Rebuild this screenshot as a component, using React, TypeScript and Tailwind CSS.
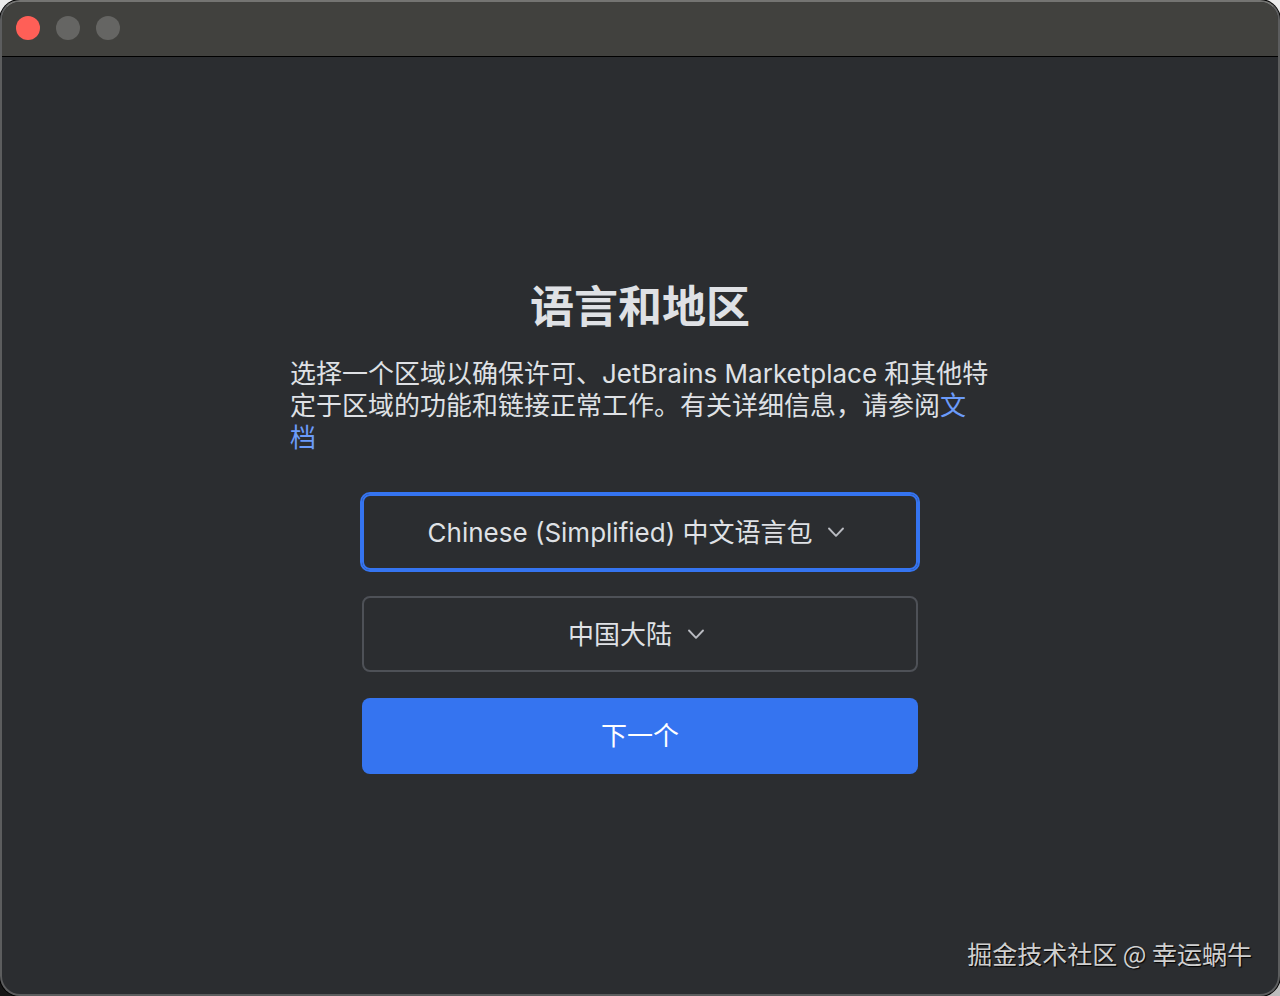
import { useState } from "react";

type PickerProps = {
  label: string;
  options: string[];
};

function Chevron() {
  return (
    <svg
      className="pointer-events-none h-8 w-8 shrink-0"
      viewBox="0 0 32 32"
      fill="none"
      stroke="#b9bbc1"
      strokeWidth="1.9"
      strokeLinecap="round"
      strokeLinejoin="round"
      aria-hidden="true"
    >
      <path d="M9 12.5 16 19.8l7-7.3" />
    </svg>
  );
}

function Picker({ label, options }: PickerProps) {
  const [value, setValue] = useState(options[0]);
  return (
    <div className="flex h-[76px] items-center justify-center rounded-lg border-2 border-[#4e5157] first:border-[#3574f0] first:outline-2 first:outline-[#3574f0]">
      <select
        aria-label={label}
        value={value}
        onChange={(e) => setValue(e.target.value)}
        className="h-12 cursor-pointer appearance-none bg-transparent pt-0.5 pr-2 leading-10 outline-none [field-sizing:content]"
      >
        {options.map((option) => (
          <option key={option} className="bg-[#2b2d30]">
            {option}
          </option>
        ))}
      </select>
      <Chevron />
    </div>
  );
}

function TitleBar() {
  return (
    <header className="flex h-[55px] items-center gap-4 border-b border-black bg-[#41413e] px-3.5 pb-0.5">
      <button type="button" aria-label="关闭" className="size-6 rounded-full bg-[#ff5f57]" />
      <button type="button" aria-label="最小化" className="size-6 rounded-full bg-[#656563]" />
      <button type="button" aria-label="缩放" className="size-6 rounded-full bg-[#656563]" />
    </header>
  );
}

export default function App() {
  return (
    <div className="flex min-h-screen bg-[linear-gradient(#ececec_50%,transparent_50%),linear-gradient(to_right,#151515,#bdbdbd)] font-[Inter,'Noto_Sans_CJK_SC',sans-serif] text-[26px] leading-8 text-[#dfe1e5]">
      <div className="relative flex grow flex-col overflow-hidden rounded-[20px] border-2 border-[#5c5d5e] border-t-[#747472] bg-[#2b2d30] shadow-[0_0_0_1px_#000]">
        <TitleBar />
        <main className="flex grow flex-col items-center justify-center px-6 pt-1">
          <h1 className="text-[44px] leading-[52px] font-bold">语言和地区</h1>
          <p className="mt-[25px] w-full max-w-[700px]">
            选择一个区域以确保许可、JetBrains Marketplace 和其他特定于区域的功能和链接正常工作。有关详细信息，请参阅
            <a href="#docs" className="text-[#6b9bfa]">
              文档
            </a>
          </p>
          <form
            className="mt-10 flex w-full max-w-[556px] flex-col gap-[26px]"
            onSubmit={(e) => e.preventDefault()}
          >
            <Picker label="语言" options={["Chinese (Simplified) 中文语言包"]} />
            <Picker label="地区" options={["中国大陆"]} />
            <button type="submit" className="h-[76px] rounded-lg bg-[#3574f0] text-white">
              下一个
            </button>
          </form>
        </main>
        <div className="absolute right-[26px] bottom-[25px] text-[25px] leading-8 text-[#d0d0d0] font-['Noto_Sans_CJK_SC',sans-serif] [text-shadow:1px_1px_1px_#000]">
          掘金技术社区 @ 幸运蜗牛
        </div>
      </div>
    </div>
  );
}
